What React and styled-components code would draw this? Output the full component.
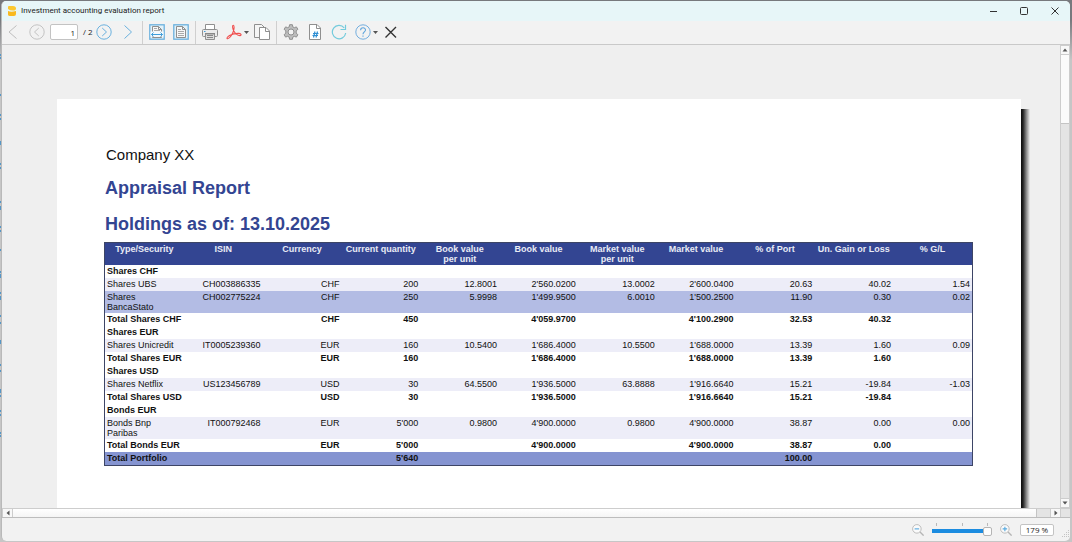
import React from "react";
import styled, { createGlobalStyle, css } from "styled-components";

const GlobalStyle = createGlobalStyle`
  *, *::before, *::after { box-sizing: border-box; }
  body { margin: 0; background: #c4c4c4; }
  button, input { font: inherit; color: inherit; }
`;

const ui = `"Open Sans", "Noto Sans", sans-serif`;
const blue = "#6bb1de";
const grey = "#8f8f8f";

const Desktop = styled.div`
  position: relative;
  height: 100vh;
  padding: 1px 2px 1px 1px;
  background: linear-gradient(#77797d 0, #77797d 20px, #c6c6c6 60px);
`;

const BackMarks = styled.svg`
  position: absolute;
  left: 0;
  top: 0;
`;

const Window = styled.div`
  height: 100%;
  display: flex;
  flex-direction: column;
  overflow: hidden;
  border-left: 1px solid #b9b9b9;
  border-radius: 5px;
  background: #f2f2f2;
  font-family: ${ui};
  color: #1b1b1b;
`;

const TitleBar = styled.header`
  display: flex;
  align-items: center;
  flex: none;
  height: 20px;
  padding: 0 5px;
  gap: 4px;
  background: #e7f6f8;
`;

const Title = styled.h1`
  margin: 0;
  flex: 1;
  font-family: Roboto, ${ui};
  font-size: 8px;
  line-height: 12px;
  font-weight: 400;
`;

const WindowButtons = styled.div`
  display: flex;
  gap: 15px;
  padding-right: 2px;
`;

const IconButton = styled.button`
  display: flex;
  align-items: center;
  flex: none;
  gap: 2px;
  padding: 0;
  border: 0;
  background: none;
  svg { display: block; }
`;

const MenuButton = styled(IconButton)`
  margin-right: -3px;
`;

const Toolbar = styled.div`
  display: flex;
  align-items: stretch;
  flex: none;
  height: 24px;
  border-bottom: 1px solid #c9c9c9;
`;

const Group = styled.div`
  display: flex;
  align-items: center;
  gap: 8px;
  padding: 0 6px 1px;
  border-right: 1px solid ${(p) => (p.$last ? "transparent" : "#cfcfcf")};
  &:first-child { padding-left: 3px; }
`;

const PageField = styled.label`
  display: flex;
  align-items: center;
  gap: 5px;
  margin: 0 -5px 0 -3px;
  font-size: 8px;
  line-height: 12px;
  white-space: pre;
`;

const Field = styled.input`
  width: ${(p) => p.$width}px;
  height: ${(p) => p.$height}px;
  padding: 0 2px;
  border: 1px solid #c3c3c3;
  border-radius: 2px;
  background: #fff;
  font-family: ${ui};
  font-size: 8px;
  text-align: ${(p) => p.$align};
`;

const Body = styled.div`
  display: flex;
  flex: 1;
  min-height: 0;
`;

const Viewport = styled.main`
  display: flex;
  flex: 1;
  min-width: 0;
  overflow: hidden;
  padding: 54px 30px 0 55px;
  background: #efefef;
`;

const Paper = styled.article`
  flex: 1;
  min-width: 0;
  padding: 47px 48px 0 47px;
  background: #fff;
  font-family: "Liberation Sans", Arial, sans-serif;
`;

const PaperShadow = styled.div`
  flex: none;
  width: 9px;
  margin-top: 10px;
  background: linear-gradient(to right, #0c0c0c 0, #222 22%, #8a8a8a 60%, #efefef 100%);
`;

const Company = styled.p`
  margin: 0 0 12px;
  padding-left: 2px;
  font-size: 15px;
  line-height: 18px;
  color: #111;
`;

const Heading = styled.h2`
  margin: 0 0 ${(p) => (p.$tight ? 6 : 12)}px;
  padding-left: 1px;
  font-size: 18px;
  line-height: 24px;
  font-weight: 700;
  color: #334592;
`;

const Table = styled.table`
  width: 100%;
  table-layout: fixed;
  border-spacing: 0;
  border: 1px solid #3d4566;
  font-size: 9px;
  line-height: 10px;
`;

const HeadCell = styled.th`
  height: 22px;
  padding: 1px 2px;
  vertical-align: top;
  text-align: center;
  font-weight: 700;
  color: #e9ebf5;
  background: #334592;
  white-space: pre;
`;

const rowKinds = {
  group: css`font-weight: 700;`,
  item: css`background: #ededf8;`,
  selected: css`background: #b3bce4;`,
  total: css`font-weight: 700;`,
  grand: css`background: #8594d1; font-weight: 700;`,
};

const Row = styled.tr`
  color: #111;
  ${(p) => rowKinds[p.$kind]}
`;

const Cell = styled.td`
  height: 13px;
  padding: 1px 2px;
  vertical-align: top;
  text-align: right;
  white-space: nowrap;
`;

const NameCell = styled.th`
  height: 13px;
  padding: 1px 2px;
  vertical-align: top;
  text-align: left;
  font-weight: inherit;
  white-space: pre;
`;

const VScroll = styled.div`
  display: flex;
  flex-direction: column;
  flex: none;
  width: 10px;
  border-left: 1px solid #cdcdcd;
  border-right: 1px solid #cdcdcd;
  background: #e4e4e4;
`;

const HScroll = styled.div`
  display: flex;
  flex: none;
  height: 10px;
  border-top: 1px solid #cdcdcd;
  border-bottom: 1px solid #bdbdbd;
  background: #e4e4e4;
`;

const ScrollButton = styled.button`
  display: flex;
  align-items: center;
  justify-content: center;
  flex: none;
  width: ${(p) => (p.$across ? 11 : 8)}px;
  height: ${(p) => (p.$across ? 8 : 10)}px;
  padding: 0;
  border: 0 solid #cdcdcd;
  border-width: ${(p) => (p.$across ? "0 1px" : "1px 0")};
  background: #f8f8f8;
`;

const VThumb = styled.div`
  flex: 0 0 15%;
  border-bottom: 1px solid #c4c4c4;
  background: #fbfbfb;
`;

const HThumb = styled.div`
  flex: 1;
  border-right: 1px solid #c4c4c4;
  background: linear-gradient(#fff, #f5f5f5);
`;

const Spacer = styled.div`
  flex: ${(p) => p.$size || "1"};
`;

const StatusBar = styled.footer`
  display: flex;
  align-items: center;
  justify-content: flex-end;
  flex: none;
  height: 23px;
  gap: 8px;
`;

const Slider = styled.label`
  display: flex;
  flex-direction: column;
  width: 60px;
`;

const Ticks = styled.span`
  display: flex;
  justify-content: space-between;
  height: 3px;
  padding: 0 4px;
  i { width: 1px; background: #b9b9b9; }
`;

const Range = styled.input`
  appearance: none;
  width: 100%;
  height: 11px;
  margin: 0;
  background: linear-gradient(#1c8ce0, #1c8ce0) center / 100% 4px no-repeat;
  &::-webkit-slider-thumb {
    appearance: none;
    width: 9px;
    height: 9px;
    border: 1px solid #b5b5b5;
    border-radius: 2px;
    background: #fdfdfd;
  }
`;

const Icon = ({ children, size = 16, color = grey, width = 1 }) => (
  <svg width={size} height={size} viewBox="0 0 16 16" fill="none" stroke={color} strokeWidth={width} aria-hidden="true">
    {children}
  </svg>
);

const Caret = () => (
  <svg width="5" height="3" viewBox="0 0 5 3" aria-hidden="true">
    <path d="M0 0H5L2.5 3Z" fill="#555" />
  </svg>
);

const Arrow = ({ turn }) => (
  <svg width="6" height="6" viewBox="0 0 6 6" aria-hidden="true">
    <path d="M0.5 4.5L3 1.5L5.5 4.5Z" fill="#555" transform={`rotate(${turn} 3 3)`} />
  </svg>
);

const Chevron = ({ next }) => (
  <Icon color={next ? blue : "#bdbdbd"}>
    <path d={next ? "M4.500 1.500L11.500 8L4.500 14.500" : "M11.500 1.500L4 8L11.500 14.500"} />
  </Icon>
);

const CircleChevron = ({ next }) => (
  <Icon color={next ? blue : "#c3c3c3"}>
    <circle cx="8" cy="8" r="7.200" />
    <path d={next ? "M6.200 4L10.500 8L6.200 12" : "M9.800 4L5.500 8L9.800 12"} />
  </Icon>
);

const FitIcon = ({ wide }) => (
  <Icon>
    <rect x="0.800" y="0.800" width="14.400" height="14.400" fill="#e3f1f8" stroke={blue} strokeWidth="1.300" />
    <path d="M3.500 13.500V2.500H9.500L12.500 5.500V13.500Z" fill="#f7f7f7" />
    <path d="M9.500 2.500V5.500H12.500" />
    {wide ? (
      <>
        <path d="M5 4.500H8M5 6.500H11" stroke="#aaa" />
        <path d="M1.500 7.500H14.500V12.500H1.500Z" fill="#f4fafd" stroke="none" />
        <path d="M2.500 10.500H13.500M4.500 8.500L2.500 10.500L4.500 12.500M11.500 8.500L13.500 10.500L11.500 12.500" stroke="#3f9edb" />
      </>
    ) : (
      <path d="M5 5.500H8M5 7.500H11M5 9.500H11M5 11.500H11" stroke="#aaa" />
    )}
  </Icon>
);

const PrintIcon = () => (
  <Icon>
    <path d="M3.500 5.500V0.500H12.500V5.500" fill="#fff" />
    <rect x="0.500" y="5.500" width="15" height="7" rx="1" fill="#ececec" />
    <path d="M3.500 10V15.500H12.500V10Z" fill="#ddd" />
    <path d="M3 9.500H13M5 11.500H11M5 13.500H11" stroke="#888" />
    <path d="M2 7.500H3.500" stroke="#3f9edb" />
  </Icon>
);

const PdfIcon = () => (
  <Icon color="#f05050" width={1.1}>
    <path d="M7.200 1.200C6 1.400 6.600 4.500 7.800 7C9 9.200 11.500 11.500 14 11.600C15.800 11.400 15.300 9.600 13 9.400C9.500 9.200 6 10.200 3.500 11.400C1 12.800 0.300 14.800 1.700 14.800C3.800 14.500 6.500 10.300 7.500 7C8.200 4.500 8.500 1.300 7.200 1.200Z" />
  </Icon>
);

const CopyIcon = () => (
  <Icon>
    <path d="M5.500 13.500H0.500V0.500H7.500L10 3" fill="#f5f5f5" />
    <path d="M5.500 3.500H12L15.500 7V15.500H5.500Z" fill="#fff" />
    <path d="M11.500 3.500V7.500H15.500" />
  </Icon>
);

const GearIcon = () => (
  <Icon>
    <path
      d="M6.600 0.700H9.400L9.800 2.900L11.300 3.700L13.400 2.900L14.900 5.300L13.200 6.800V9.200L14.900 10.700L13.400 13.100L11.300 12.300L9.800 13.100L9.400 15.300H6.600L6.200 13.100L4.700 12.300L2.600 13.100L1.100 10.700L2.800 9.200V6.800L1.100 5.300L2.600 2.900L4.700 3.700L6.200 2.900Z"
      fill="#bdbdbd"
    />
    <circle cx="8" cy="8" r="3" fill="#f2f2f2" />
  </Icon>
);

const NumberIcon = () => (
  <Icon>
    <path d="M2.500 0.500H10L13.500 4V15.500H2.500Z" fill="#fff" />
    <path d="M9.500 0.500V4.500H13.500" />
    <path d="M8 7.500L6.500 13.500M10.500 7.500L9 13.500M6 9.500H11.500M5.500 11.500H11" stroke="#2f8fd4" strokeWidth="1.200" />
  </Icon>
);

const RefreshIcon = () => (
  <Icon color="#74cbdc" width={1.2}>
    <path d="M13.200 3.800A6.700 6.700 0 1 0 14.700 9" />
    <path d="M14.500 0.800V5.500H9.500" />
  </Icon>
);

const HelpIcon = () => (
  <Icon color="#74aede">
    <circle cx="8" cy="8" r="7.200" />
    <path d="M5.600 6.200C5.600 3 10.500 3 10.500 6C10.500 7.800 8 8 8 10.200M8 11.500V12.800" stroke="#5ea5dc" strokeWidth="1.100" />
  </Icon>
);

const CloseIcon = () => (
  <Icon color="#333" width={1.4}>
    <path d="M2.500 3L13 13.500M13 3L2.500 13.500" />
  </Icon>
);

const ZoomIcon = ({ plus }) => (
  <Icon size={12} color="#b5b5b5" width={1.2}>
    <circle cx="6.500" cy="6.500" r="5.700" fill="#fafafa" />
    <path d="M10.700 10.700L15.500 15.500" strokeWidth="1.800" />
    <path d={plus ? "M3.500 6.500H9.500M6.500 3.500V9.500" : "M3.500 6.500H9.500"} stroke="#58aae0" strokeWidth="1.500" />
  </Icon>
);

const Logo = () => (
  <svg width="10" height="12" viewBox="0 0 10 12" aria-hidden="true">
    <path d="M1 2Q1 1 2 1H6Q9 1 9 3.500Q9 5.500 6 5.500Q3 5.500 1 4Z" fill="#fcc82f" />
    <path d="M1 6Q4 7.500 9 6V9Q9 11 7 11H3Q1 11 1 9.500Z" fill="#f9b91f" />
  </svg>
);

const markRows = [54, 57, 94, 114, 118, 141, 143, 163, 167, 201, 206, 208, 226, 230, 249, 271, 274, 276, 292, 296, 298, 315, 322, 340, 342, 364, 370, 389, 391, 395, 410, 414, 432, 435];

const columns = [
  "Type/Security", "ISIN", "Currency", "Current quantity", "Book value\nper unit", "Book value",
  "Market value\nper unit", "Market value", "% of Port", "Un. Gain or Loss", "% G/L",
];

const rows = [
  ["group", "Shares CHF"],
  ["item", "Shares UBS", "CH003886335", "CHF", "200", "12.8001", "2'560.0200", "13.0002", "2'600.0400", "20.63", "40.02", "1.54"],
  ["selected", "Shares\nBancaStato", "CH002775224", "CHF", "250", "5.9998", "1'499.9500", "6.0010", "1'500.2500", "11.90", "0.30", "0.02"],
  ["total", "Total Shares CHF", "", "CHF", "450", "", "4'059.9700", "", "4'100.2900", "32.53", "40.32", ""],
  ["group", "Shares EUR"],
  ["item", "Shares Unicredit", "IT0005239360", "EUR", "160", "10.5400", "1'686.4000", "10.5500", "1'688.0000", "13.39", "1.60", "0.09"],
  ["total", "Total Shares EUR", "", "EUR", "160", "", "1'686.4000", "", "1'688.0000", "13.39", "1.60", ""],
  ["group", "Shares USD"],
  ["item", "Shares Netflix", "US123456789", "USD", "30", "64.5500", "1'936.5000", "63.8888", "1'916.6640", "15.21", "-19.84", "-1.03"],
  ["total", "Total Shares USD", "", "USD", "30", "", "1'936.5000", "", "1'916.6640", "15.21", "-19.84", ""],
  ["group", "Bonds EUR"],
  ["item", "Bonds Bnp\nParibas", "IT000792468", "EUR", "5'000", "0.9800", "4'900.0000", "0.9800", "4'900.0000", "38.87", "0.00", "0.00"],
  ["total", "Total Bonds EUR", "", "EUR", "5'000", "", "4'900.0000", "", "4'900.0000", "38.87", "0.00", ""],
  ["grand", "Total Portfolio", "", "", "5'640", "", "", "", "", "100.00", "", ""],
];

const Report = () => (
  <Table>
    <thead>
      <tr>
        {columns.map((c) => <HeadCell key={c} scope="col">{c}</HeadCell>)}
      </tr>
    </thead>
    <tbody>
      {rows.map(([kind, name, ...values]) => (
        <Row key={name} $kind={kind}>
          <NameCell scope="row" colSpan={values.length ? 1 : columns.length}>{name}</NameCell>
          {values.map((v, i) => <Cell key={i}>{v}</Cell>)}
        </Row>
      ))}
    </tbody>
  </Table>
);

export default function App() {
  return (
    <Desktop>
      <GlobalStyle />
      <BackMarks width="1" height="440" aria-hidden="true">
        {markRows.map((y) => <rect key={y} x="0" y={y} width="1" height="2" fill="#5596c6" />)}
      </BackMarks>
      <Window>
        <TitleBar>
          <Logo />
          <Title>Investment accounting evaluation report</Title>
          <WindowButtons>
            <IconButton aria-label="Minimize"><Icon color="#333"><path d="M5 8.500H12" /></Icon></IconButton>
            <IconButton aria-label="Maximize"><Icon color="#333"><rect x="4.500" y="4.500" width="7" height="7" rx="1" /></Icon></IconButton>
            <IconButton aria-label="Close window"><Icon color="#333"><path d="M4.500 4.500L11.500 11.500M11.500 4.500L4.500 11.500" /></Icon></IconButton>
          </WindowButtons>
        </TitleBar>
        <Toolbar role="toolbar" aria-label="Preview">
          <Group>
            <IconButton aria-label="First page"><Chevron /></IconButton>
            <IconButton aria-label="Previous page"><CircleChevron /></IconButton>
            <PageField>
              <Field aria-label="Page" $width={28} $height={16} $align="right" defaultValue="1" />
              / 2
            </PageField>
            <IconButton aria-label="Next page"><CircleChevron next /></IconButton>
            <IconButton aria-label="Last page"><Chevron next /></IconButton>
          </Group>
          <Group>
            <IconButton aria-label="Fit width"><FitIcon wide /></IconButton>
            <IconButton aria-label="Fit page"><FitIcon /></IconButton>
          </Group>
          <Group>
            <IconButton aria-label="Print"><PrintIcon /></IconButton>
            <MenuButton aria-label="Export PDF"><PdfIcon /><Caret /></MenuButton>
            <IconButton aria-label="Copy"><CopyIcon /></IconButton>
          </Group>
          <Group $last>
            <IconButton aria-label="Settings"><GearIcon /></IconButton>
            <IconButton aria-label="Page numbers"><NumberIcon /></IconButton>
            <IconButton aria-label="Refresh"><RefreshIcon /></IconButton>
            <MenuButton aria-label="Help"><HelpIcon /><Caret /></MenuButton>
            <IconButton aria-label="Close preview"><CloseIcon /></IconButton>
          </Group>
        </Toolbar>
        <Body>
          <Viewport>
            <Paper>
              <Company>Company XX</Company>
              <Heading>Appraisal Report</Heading>
              <Heading $tight>Holdings as of: 13.10.2025</Heading>
              <Report />
            </Paper>
            <PaperShadow />
          </Viewport>
          <VScroll>
            <ScrollButton aria-label="Scroll up"><Arrow turn={0} /></ScrollButton>
            <VThumb />
            <Spacer />
            <ScrollButton aria-label="Scroll down"><Arrow turn={180} /></ScrollButton>
          </VScroll>
        </Body>
        <HScroll>
          <ScrollButton $across aria-label="Scroll left"><Arrow turn={270} /></ScrollButton>
          <HThumb />
          <Spacer $size="0 0 13px" />
          <ScrollButton $across aria-label="Scroll right"><Arrow turn={90} /></ScrollButton>
          <Spacer $size="0 0 9px" />
        </HScroll>
        <StatusBar>
          <IconButton aria-label="Zoom out"><ZoomIcon /></IconButton>
          <Slider>
            <Ticks><i /><i /><i /></Ticks>
            <Range type="range" aria-label="Zoom" min="0" max="100" defaultValue="100" />
          </Slider>
          <IconButton aria-label="Zoom in"><ZoomIcon plus /></IconButton>
          <Field aria-label="Zoom level" $width={34} $height={12} $align="center" defaultValue="179 %" />
          <svg width="8" height="16" viewBox="0 0 8 16" fill="#c4c4c4" aria-hidden="true">
            <path d="M6 8h1v1H6zM4 10h1v1H4zM6 10h1v1H6zM2 12h1v1H2zM4 12h1v1H4zM6 12h1v1H6zM0 14h1v1H0zM2 14h1v1H2zM4 14h1v1H4zM6 14h1v1H6z" />
          </svg>
        </StatusBar>
      </Window>
    </Desktop>
  );
}
